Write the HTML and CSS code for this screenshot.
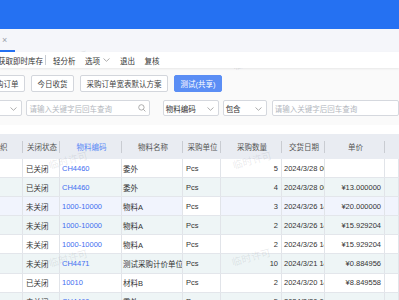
FILE: index.html
```html
<!DOCTYPE html>
<html lang="zh-CN">
<head>
<meta charset="utf-8">
<link rel="stylesheet" href="styles.css">
</head>
<body>
<div class="page">
  <div class="topbar"></div>
  <div class="tabs">
    <div class="tab"><span class="close">×</span></div>
  </div>
  <div class="menu">
    <span class="mi first">获取即时库存</span>
    <span class="sep"></span>
    <span class="mi">轻分析</span>
    <span class="mi drop">选项<svg class="chev" width="7" height="4" viewBox="0 0 7 4"><path d="M0.5 0.5 L3.5 3.3 L6.5 0.5" fill="none" stroke="#999" stroke-width="0.8"/></svg></span>
    <span class="mi">退出</span>
    <span class="mi">复核</span>
  </div>
  <div class="toolbar">
    <div class="btns">
      <span class="btn first">采购订单</span>
      <span class="btn">今日收货</span>
      <span class="btn">采购订单宽表默认方案</span>
      <span class="btn primary">测试(共享)</span>
    </div>
    <div class="filters">
      <span class="sel sel0"><svg class="chev" width="7" height="4" viewBox="0 0 7 4"><path d="M0.5 0.5 L3.5 3.3 L6.5 0.5" fill="none" stroke="#999" stroke-width="0.8"/></svg></span>
      <span class="inp inp1"><span class="ph">请输入关键字后回车查询</span><svg class="search" width="8" height="8" viewBox="0 0 8 8"><circle cx="3.4" cy="3.4" r="2.7" fill="none" stroke="#999" stroke-width="0.8"/><path d="M5.4 5.4 L7.4 7.4" stroke="#999" stroke-width="0.8"/></svg></span>
      <span class="sel sel1"><span class="val">物料编码</span><svg class="chev" width="7" height="4" viewBox="0 0 7 4"><path d="M0.5 0.5 L3.5 3.3 L6.5 0.5" fill="none" stroke="#999" stroke-width="0.8"/></svg></span>
      <span class="sel sel2"><span class="val">包含</span><svg class="chev" width="7" height="4" viewBox="0 0 7 4"><path d="M0.5 0.5 L3.5 3.3 L6.5 0.5" fill="none" stroke="#999" stroke-width="0.8"/></svg></span>
      <span class="inp inp2"><span class="ph">请输入关键字后回车查询</span></span>
    </div>
  </div>
  <div class="grid">
    <div class="row head">
      <div class="c l">织</div>
      <div class="c ctr">关闭状态</div>
      <div class="c ctr blue2">物料编码</div>
      <div class="c ctr">物料名称</div>
      <div class="c ctr">采购单位</div>
      <div class="c ctr">采购数量</div>
      <div class="c ctr">交货日期</div>
      <div class="c ctr">单价</div>
      <div class="c"></div>
    </div>
    <div class="row">
      <div class="c"></div><div class="c">已关闭</div><div class="c link">CH4460</div><div class="c nm">委外</div><div class="c">Pcs</div><div class="c r">5</div><div class="c date">2024/3/28 00:00:00</div><div class="c r"></div><div class="c"></div>
    </div>
    <div class="row alt">
      <div class="c"></div><div class="c">已关闭</div><div class="c link">CH4460</div><div class="c nm">委外</div><div class="c">Pcs</div><div class="c r">4</div><div class="c date">2024/3/28 00:00:00</div><div class="c r">¥13.000000</div><div class="c"></div>
    </div>
    <div class="row hover">
      <div class="c"></div><div class="c">未关闭</div><div class="c link">1000-10000</div><div class="c nm">物料A</div><div class="c w">Pcs</div><div class="c r">3</div><div class="c date">2024/3/26 14:00:00</div><div class="c r">¥20.000000</div><div class="c"></div>
    </div>
    <div class="row alt">
      <div class="c"></div><div class="c">未关闭</div><div class="c link">1000-10000</div><div class="c nm">物料A</div><div class="c">Pcs</div><div class="c r">2</div><div class="c date">2024/3/26 14:00:00</div><div class="c r">¥15.929204</div><div class="c"></div>
    </div>
    <div class="row">
      <div class="c"></div><div class="c">未关闭</div><div class="c link">1000-10000</div><div class="c nm">物料A</div><div class="c">Pcs</div><div class="c r">2</div><div class="c date">2024/3/26 14:00:00</div><div class="c r">¥15.929204</div><div class="c"></div>
    </div>
    <div class="row alt">
      <div class="c"></div><div class="c">未关闭</div><div class="c link">CH4471</div><div class="c nm">测试采购计价单位</div><div class="c">Pcs</div><div class="c r">10</div><div class="c date">2024/3/21 14:00:00</div><div class="c r">¥0.884956</div><div class="c"></div>
    </div>
    <div class="row">
      <div class="c"></div><div class="c">已关闭</div><div class="c link">10010</div><div class="c nm">材料B</div><div class="c">Pcs</div><div class="c r">2</div><div class="c date">2024/3/20 14:00:00</div><div class="c r">¥8.849558</div><div class="c"></div>
    </div>
    <div class="row alt">
      <div class="c"></div><div class="c">未关闭</div><div class="c link">CH4460</div><div class="c nm">委外</div><div class="c">Pcs</div><div class="c r">5</div><div class="c date">2024/2/20 00:00:00</div><div class="c r"></div><div class="c"></div>
    </div>
  </div>
  <div class="wm w1">临时许可</div>
  <div class="wm w2">临时许可</div>
  <div class="wm w3">临时许可</div>
  <div class="wm w4">临时许可</div>
  <div class="wm w5">临时许可</div>
  <div class="wm w6">临时许可</div>
</div>
</body>
</html>
```

FILE: styles.css
```css
* { box-sizing: border-box; }
html, body { margin: 0; padding: 0; }
body {
  width: 399px;
  height: 300px;
  overflow: hidden;
  background: #fff;
  font-family: "Liberation Sans", "Noto Sans CJK SC", sans-serif;
  font-size: 7.5px;
  color: #333;
}
.page { position: relative; width: 399px; height: 300px; overflow: hidden; }

.topbar { height: 29px; background: #2571f2; }

.tabs { height: 23px; background: #f5f6fa; display: flex; align-items: flex-end; }
.tab {
  width: 15px; height: 23px;
  border-bottom: 2px solid #2571f2;
  display: flex; align-items: center; justify-content: flex-start;
}
.close { color: #9aa0a8; font-size: 9px; line-height: 1; margin-left: 2px; margin-top: 1px; }

.menu {
  height: 16px; background: #fff;
  display: flex; align-items: center;
  box-shadow: 0 1px 2px rgba(0,0,0,0.08);
  position: relative; z-index: 1;
}
.mi { display: flex; align-items: center; white-space: nowrap; margin-right: 9.5px; }
.mi.first { margin-left: -2px; margin-right: 2px; }
.sep { width: 1px; height: 10px; background: #c8ccd2; margin-right: 7px; }
.mi.drop .chev { margin-left: 3px; }
.mi.drop { margin-right: 10px; }

.toolbar { background: #fafafa; height: 57px; padding-top: 7px; }
.btns { display: flex; gap: 6px; height: 17px; }
.btn {
  height: 17px; padding: 0 5.5px;
  border: 1px solid #d3d6dc; border-radius: 2px;
  background: #fff;
  display: flex; align-items: center; white-space: nowrap; color: #444;
}
.btn.first { margin-left: -18px; }
.btn.primary { background: #5b8ef5; border-color: #5b8ef5; color: #fff; }

.filters { display: flex; height: 16px; margin-top: 8px; }
.sel, .inp {
  height: 16px; border: 1px solid #d5d8de; border-radius: 2px; background: #fff;
  display: flex; align-items: center; white-space: nowrap; position: relative;
}
.sel .chev { position: absolute; right: 4px; top: 6px; }
.sel0 { width: 30px; margin-left: -7px; }
.inp1 { width: 126px; margin-left: 4px; }
.sel1 { width: 57px; margin-left: 13px; }
.sel2 { width: 45px; margin-left: 4px; }
.inp2 { width: 130px; margin-left: 5px; }
.val { margin-left: 2px; color: #333; }
.ph { margin-left: 2px; color: #b3b7be; }
.search { position: absolute; right: 3px; top: 3px; }

.grid { margin-top: 9px; }
.row {
  display: grid;
  grid-template-columns: 23px 37px 62px 61px 38px 61px 43px 60px 1fr;
  height: 19.1px;
  border-bottom: 1px solid #e3e6eb;
  background: #fff;
}
.row.alt { background: #eef5f6; }
.row.hover { background: #f1f4fd; }
.row.head { height: 25px; background: #e9ecf2; border-bottom: none; color: #555; }
.c {
  display: flex; align-items: center;
  padding: 0 2px 0 3px;
  white-space: nowrap; overflow: hidden;
  border-right: 1px solid #e1e4e9;
}
.head .c { border-right: none; position: relative; }
.head .c::after {
  content: ""; position: absolute; right: 0; top: 7px; height: 12px; width: 1px; background: #c9ccd2;
}
.head .c:last-child::after { display: none; }
.head .c.l { padding-left: 0; }
.ctr { justify-content: center; }
.blue2 { color: #5b8af5; }
.link { color: #3f6ef0; padding-left: 2px; }
.nm { padding-left: 1px; padding-right: 0; }
.r { justify-content: flex-end; padding-right: 3px; }
.date { padding-left: 2px; padding-right: 0; }
.w { background: #fff; }

.wm {
  position: absolute;
  font-size: 10px;
  color: rgba(120,120,130,0.16);
  transform: rotate(-15deg);
  white-space: nowrap;
  pointer-events: none;
}
.w1 { left: 48px; top: 51px; }
.w2 { left: 232px; top: 53px; }
.w3 { left: 48px; top: 152px; }
.w4 { left: 232px; top: 152px; }
.w5 { left: 48px; top: 250px; }
.w6 { left: 231px; top: 249px; }
```
